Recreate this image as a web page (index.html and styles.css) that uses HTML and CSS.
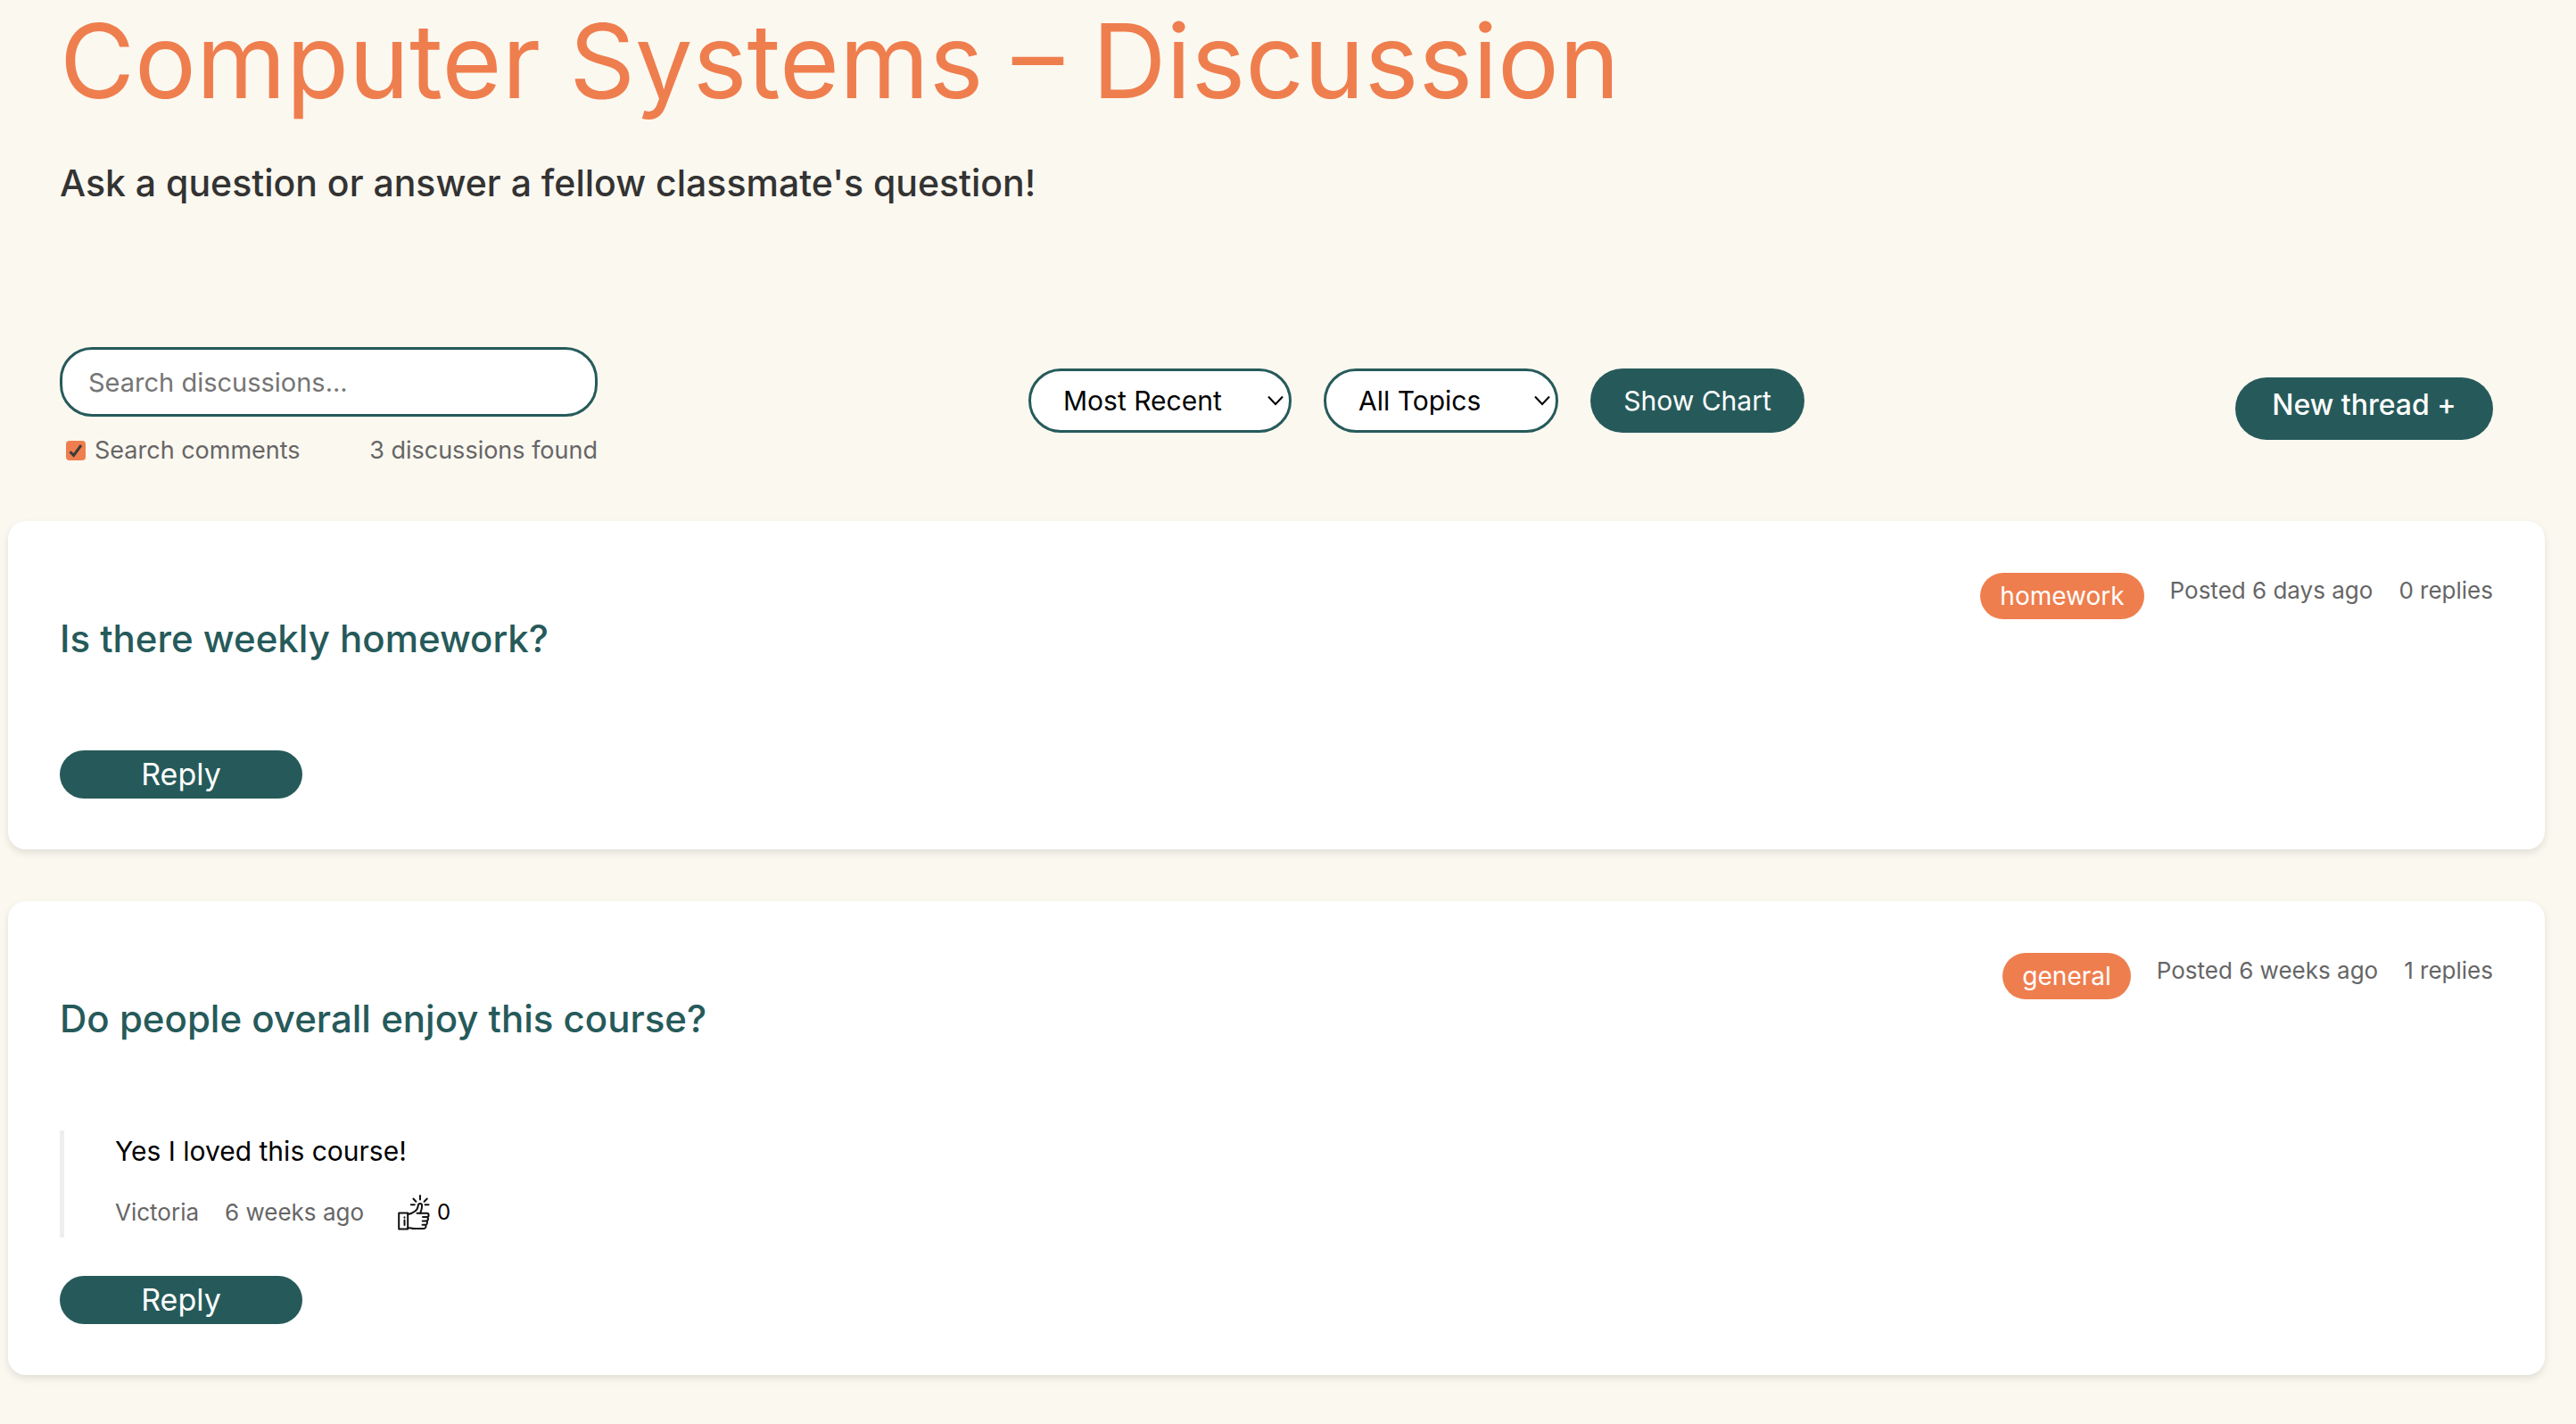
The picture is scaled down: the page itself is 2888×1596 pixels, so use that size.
FILE: index.html
```html
<!DOCTYPE html>
<html lang="en">
<head>
<meta charset="utf-8">
<meta name="viewport" content="width=device-width, initial-scale=1">
<title>Computer Systems – Discussion</title>
<link rel="stylesheet" href="styles.css">
</head>
<body>
<main class="page">
  <header class="intro">
    <h1 class="course-title">Computer Systems – Discussion</h1>
    <p class="tagline">Ask a question or answer a fellow classmate's question!</p>
  </header>

  <form class="toolbar">
    <div class="search">
      <input class="search-box" type="text" placeholder="Search discussions..." aria-label="Search discussions">
      <div class="search-info">
        <label class="check">
          <span class="check-mark">
            <input class="check-input" type="checkbox" checked>
            <svg class="check-icon" viewBox="0 0 22 22" aria-hidden="true"><path d="M4.5 12.2 8.6 16.4 17 5"/></svg>
          </span>
          Search comments
        </label>
        <span>3 discussions found</span>
      </div>
    </div>

    <div class="filters">
      <div class="select-wrap">
        <select class="select select-sort" aria-label="Sort by"><option>Most Recent</option></select>
        <svg class="chevron" viewBox="0 0 18 12" aria-hidden="true"><path d="M1 1.5 9 10 17 1.5"/></svg>
      </div>
      <div class="select-wrap">
        <select class="select select-topic" aria-label="Topic"><option>All Topics</option></select>
        <svg class="chevron" viewBox="0 0 18 12" aria-hidden="true"><path d="M1 1.5 9 10 17 1.5"/></svg>
      </div>
      <button class="button button-chart" type="button">Show Chart</button>
    </div>

    <button class="button button-thread" type="button">New thread +</button>
  </form>

  <section class="threads">
    <article class="card">
      <div class="meta">
        <span class="tag">homework</span>
        <span>Posted 6 days ago</span>
        <span>0 replies</span>
      </div>
      <h2 class="thread-title">Is there weekly homework?</h2>
      <button class="button button-reply" type="button">Reply</button>
    </article>

    <article class="card">
      <div class="meta">
        <span class="tag">general</span>
        <span>Posted 6 weeks ago</span>
        <span>1 replies</span>
      </div>
      <h2 class="thread-title">Do people overall enjoy this course?</h2>
      <div class="comment">
        <p class="comment-text">Yes I loved this course!</p>
        <div class="comment-meta">
          <span>Victoria</span>
          <span>6 weeks ago</span>
          <button class="like" type="button" aria-label="Like, 0 likes">
            <svg class="thumb" viewBox="0 0 36 40" aria-hidden="true">
              <path d="M1.2 20.5h10v18h-10z"/>
              <path d="M7.5 25.2v.6M7.5 28.6v5.4"/>
              <path d="M11.2 22c6-1.500 10.600-4.500 11.300-8.300l.4-2.200c.5-2.200 4.200-2 4.200 1 0 3-.8 5.500-1.900 8.300"/>
              <path d="M21.500 20.800h11c2.800 0 2.800 4.300 0 4.300h-4.500M32.500 25.100c2.200.5 2 4.400-.8 4.400h-4M32 29.500c1.700.8 1.300 4.200-1 4.200h-3.500M31 33.700c1.200 1.200.5 4.300-1.700 4.300H18.500c-2.700 0-4.800-1-7.300-1"/>
              <path d="M25 1v4.500M17.400 4.500l3 3.200M32.800 4.500l-3.200 3.200M14.800 11.300h4M30.500 11.300h4"/>
            </svg>
            <span>0</span>
          </button>
        </div>
      </div>
      <button class="button button-reply" type="button">Reply</button>
    </article>
  </section>
</main>
</body>
</html>
```
FILE: styles.css
```css
:root {
  --cream: #fbf8f0;
  --teal: #265a5a;
  --orange: #ef7e4e;
  --grey: #666;
}

* {
  box-sizing: border-box;
}

body {
  margin: 0;
  background: var(--cream);
  color: #000;
  font-family: Inter, "Liberation Sans", sans-serif;
  font-size: 26px;
  line-height: 32px;
}

h1,
h2,
p {
  margin: 0;
  font-weight: 400;
}

input,
select,
button {
  margin: 0;
  font: inherit;
}

.page {
  padding: 0 35px 56px 9px;
}

.intro {
  padding: 0 58px;
}

.course-title {
  color: var(--orange);
  font-size: 115px;
  line-height: 138px;
}

.tagline {
  padding-top: 40px;
  color: #333;
  font-size: 41px;
  font-weight: 500;
  line-height: 54px;
}

/* Search, filters and new thread */
.toolbar {
  display: flex;
  justify-content: space-between;
  align-items: center;
  margin-top: 157px;
  padding: 0 58px;
}

.search {
  width: 603px;
}

.search-box {
  display: block;
  width: 100%;
  height: 78px;
  padding: 0 29px;
  border: 3px solid var(--teal);
  border-radius: 36px;
  background: #fff;
  font-size: 29px;
}

.search-box::placeholder {
  color: #757575;
  opacity: 1;
}

.search-info {
  display: flex;
  justify-content: space-between;
  padding: 22px 0 6px;
  color: var(--grey);
  font-size: 27px;
}

.check {
  display: flex;
  align-items: center;
  gap: 10px;
  padding-left: 7px;
}

.check-mark,
.select-wrap {
  display: grid;
  align-items: center;
}

.check-mark > *,
.select-wrap > * {
  grid-area: 1 / 1;
}

.check-input {
  appearance: none;
  width: 22px;
  height: 22px;
  border-radius: 4px;
  background: var(--orange);
}

.check-icon {
  width: 22px;
  height: 22px;
  fill: none;
  stroke: #3b3b3b;
  stroke-width: 3;
  pointer-events: none;
}

.filters {
  display: flex;
  gap: 36px;
  margin-bottom: 18px;
}

.select {
  appearance: none;
  height: 72px;
  padding: 0 36px;
  border: 3px solid var(--teal);
  border-radius: 36px;
  background: #fff;
  color: #000;
  font-size: 30px;
}

.select-sort {
  width: 295px;
}

.select-topic {
  width: 263px;
}

.chevron {
  justify-self: end;
  width: 18px;
  height: 12px;
  margin-right: 9px;
  fill: none;
  stroke: #000;
  stroke-width: 2;
  pointer-events: none;
}

.button {
  border: 0;
  border-radius: 36px;
  background: var(--teal);
  color: #fff;
  padding: 0;
  text-align: center;
}

.button-chart {
  width: 240px;
  height: 72px;
  font-size: 30px;
}

.button-thread {
  width: 289px;
  height: 70px;
  padding-bottom: 8px;
  font-size: 32px;
  font-weight: 500;
}

/* Thread cards */
.threads {
  display: grid;
  gap: 58px;
  margin-top: 57px;
}

.card {
  padding: 58px 58px 57px;
  border-radius: 20px;
  background: #fff;
  box-shadow: 0 4px 8px rgba(0, 0, 0, 0.1);
}

.meta {
  display: flex;
  justify-content: flex-end;
  gap: 29px;
  color: var(--grey);
  line-height: 40px;
}

.tag {
  padding: 0 22px;
  border-radius: 26px;
  background: var(--orange);
  color: #fff;
  font-size: 28px;
  line-height: 52px;
}

.thread-title {
  margin-bottom: 104px;
  color: var(--teal);
  font-size: 42px;
  font-weight: 500;
  line-height: 43px;
}

.comment {
  display: grid;
  gap: 25px;
  height: 120px;
  margin-bottom: 43px;
  padding: 7px 0 0 57px;
  border-left: 5px solid #eee;
}

.comment-text {
  font-size: 30px;
}

.comment-meta {
  display: flex;
  align-items: center;
  gap: 29px;
  height: 48px;
  color: var(--grey);
}

.like {
  display: flex;
  align-items: center;
  gap: 8px;
  margin-left: 9px;
  padding: 0;
  border: 0;
  background: none;
  color: #000;
  font-size: 24px;
}

.thumb {
  width: 36px;
  height: 40px;
  fill: none;
  stroke: #111;
  stroke-width: 2;
  stroke-linecap: round;
  stroke-linejoin: round;
}

.button-reply {
  display: block;
  width: 272px;
  height: 54px;
  font-size: 34px;
}
```
